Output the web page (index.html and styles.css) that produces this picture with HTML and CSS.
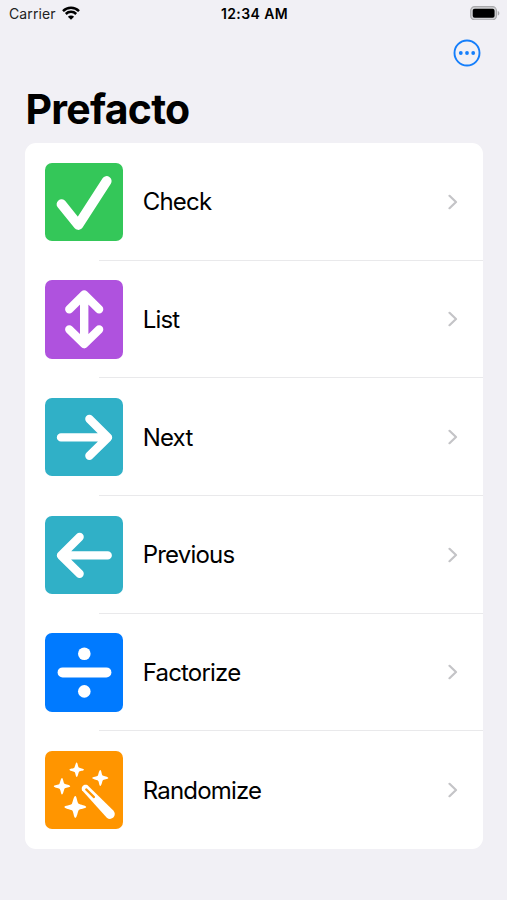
FILE: index.html
```html
<!DOCTYPE html>
<html lang="en">
<head>
<meta charset="utf-8">
<title>Prefacto</title>
<link rel="stylesheet" href="styles.css">
</head>
<body>
<header class="status">
  <div class="carrier"><span class="carrier-name">Carrier</span>
    <svg class="wifi" viewBox="0 0 18 14"><path d="M1 5.1a11.4 11.4 0 0 1 16 0M3.8 8a7.4 7.4 0 0 1 10.4 0" fill="none" stroke="#000" stroke-width="2.5"/><path d="M9 13.8 5.9 10.7a4.3 4.3 0 0 1 6.2 0z"/></svg>
  </div>
  <div class="time">12:34 AM</div>
  <svg class="battery" viewBox="0 0 31 15"><rect x=".7" y=".7" width="26.6" height="13.6" rx="4" fill="#d2d2d5" stroke="#a9a9ac" stroke-width="1.2"/><rect x="2.8" y="2.8" width="22.6" height="9.4" rx="2" fill="#000"/><path d="M28.7 5.2c2.2.7 2.2 4 0 4.7z" fill="#a9a9ac"/></svg>
</header>
<nav class="toolbar">
  <button class="more" aria-label="More"><svg viewBox="0 0 28 28"><circle cx="14" cy="14" r="12.5" fill="none" stroke="#147efb" stroke-width="1.9"/><g fill="#147efb"><circle cx="7.8" cy="14" r="1.9"/><circle cx="14" cy="14" r="1.9"/><circle cx="20.2" cy="14" r="1.9"/></g></svg></button>
</nav>
<h1 class="title">Prefacto</h1>
<main class="card">
  <a class="row"><svg class="tile green" viewBox="0 0 78.5 78.5"><path d="M16.5 41.2 33.3 62 61.7 18" stroke-width="9.8"/></svg><span class="label">Check</span><svg class="chevron" viewBox="0 0 10 16"><path d="m1.5 1.8 6.5 6.2-6.5 6.2"/></svg></a>
  <a class="row"><svg class="tile purple" viewBox="0 0 78.5 78.5"><path d="M24.3 29.3 39.2 14.6 54.1 29.3M24.3 49.4 39.2 64 54.1 49.4M39.2 15V64"/></svg><span class="label">List</span><svg class="chevron" viewBox="0 0 10 16"><path d="m1.5 1.8 6.5 6.2-6.5 6.2"/></svg></a>
  <a class="row"><svg class="tile teal" viewBox="0 0 78.5 78.5"><path d="M16 39.4H63M44.4 21 63 39.4 44.4 57.8"/></svg><span class="label">Next</span><svg class="chevron" viewBox="0 0 10 16"><path d="m1.5 1.8 6.5 6.2-6.5 6.2"/></svg></a>
  <a class="row"><svg class="tile teal" viewBox="0 0 78.5 78.5"><path d="M62.7 39.4H16M34.6 21 16 39.4 34.6 57.8"/></svg><span class="label">Previous</span><svg class="chevron" viewBox="0 0 10 16"><path d="m1.5 1.8 6.5 6.2-6.5 6.2"/></svg></a>
  <a class="row"><svg class="tile blue" viewBox="0 0 78.5 78.5"><path d="M17.6 39.4H61.4" stroke-width="10"/><circle cx="39.3" cy="20.8" r="6.3" fill="#fff" stroke="none"/><circle cx="39.3" cy="58.4" r="6.3" fill="#fff" stroke="none"/></svg><span class="label">Factorize</span><svg class="chevron" viewBox="0 0 10 16"><path d="m1.5 1.8 6.5 6.2-6.5 6.2"/></svg></a>
  <a class="row"><svg class="tile orange" viewBox="0 0 78.5 78.5"><defs><path id="spark" d="M0-10.5C1.5-10.5 1.7-4 3.2-3.2S10.5-1.5 10.5 0 4 1.7 3.2 3.2 1.5 10.5 0 10.5-1.7 4-3.2 3.2-10.5 1.5-10.5 0-4-1.7-3.2-3.2-1.5-10.5 0-10.5z" fill="#fff" stroke="none"/></defs><use href="#spark" transform="translate(31.7 18.8) scale(.69)"/><use href="#spark" transform="translate(55.3 27) scale(.76)"/><use href="#spark" transform="translate(17 35.2) scale(.78)"/><use href="#spark" transform="translate(30.3 56) scale(1.04)"/><path d="M37 39.2C35.7 35.6 38.9 32.6 42.3 34.1L68.3 59.6C72.6 64.3 66.6 70.6 61.8 66.7Z" fill="#fff" stroke="none"/><path class="slot" d="M41.2 38.4 49 46.1"/></svg><span class="label">Randomize</span><svg class="chevron" viewBox="0 0 10 16"><path d="m1.5 1.8 6.5 6.2-6.5 6.2"/></svg></a>
</main>
</body>
</html>
```
FILE: styles.css
```css
* { box-sizing: border-box; }
body { margin: 0; height: 900px; overflow: hidden; background: #f1f0f5; color: #000; font-family: Inter, "Liberation Sans", sans-serif; }
svg { display: block; flex: none; }
.status { display: grid; grid-template-columns: 1fr auto 1fr; align-items: center; height: 27px; padding: 0 7px 0 9px; }
.carrier { display: flex; align-items: center; gap: 6px; font-size: 14px; color: #222; }
.carrier-name { letter-spacing: .12px; }
.wifi { width: 18px; height: 14px; margin-top: -1px; }
.time { font-size: 14px; font-weight: 600; letter-spacing: .4px; }
.battery { width: 30px; height: 14.5px; justify-self: end; margin-top: -1px; }
.toolbar { display: flex; justify-content: flex-end; padding: 11.5px 26.5px 0 0; height: 61px; }
.more { width: 28px; height: 28px; padding: 0; border: 0; background: none; }
.title { margin: 0; padding-left: 25.5px; height: 55px; line-height: 43px; font-size: 41px; font-weight: 700; letter-spacing: -.75px; }
.card { margin: 0 24.5px 0 25px; height: 706px; display: grid; grid-template-rows: repeat(6, 1fr); background: #fff; border-radius: 11px; }
.row { display: flex; align-items: center; padding: 0 25px 0 19.7px; background: linear-gradient(#e9e9eb, #e9e9eb) right bottom / calc(100% - 74px) 1px no-repeat; }
.row:last-child { background: none; }
.tile { width: 78.5px; height: 78.5px; border-radius: 7px; fill: none; stroke: #fff; stroke-width: 8.4; stroke-linecap: round; stroke-linejoin: round; }
.green { background: #34c759; }
.purple { background: #af52de; }
.teal { background: #30b0c7; }
.blue { background: #007aff; }
.orange { background: #ff9500; }
.slot { stroke: #ff9500; stroke-width: 2.2; }
.label { flex: 1; padding: 1px 0 0 19.5px; font-size: 24px; letter-spacing: -.8px; line-height: 30px; }
.chevron { width: 10px; height: 16px; fill: none; stroke: #c4c4c7; stroke-width: 2.2; stroke-linecap: round; stroke-linejoin: round; }
```
